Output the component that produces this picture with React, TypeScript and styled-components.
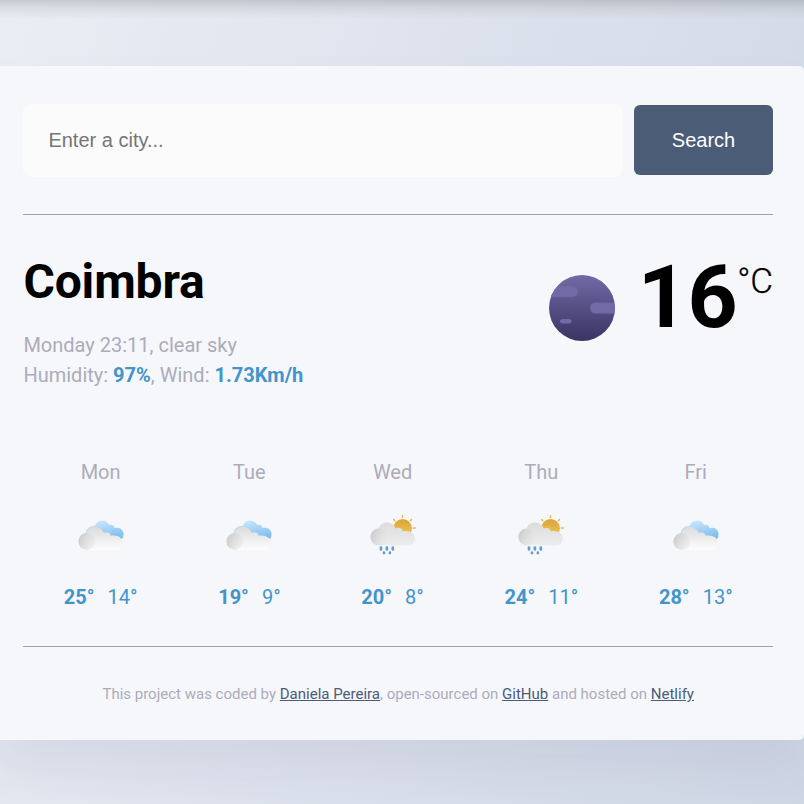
import React from "react";
import styled, { createGlobalStyle } from "styled-components";

const GlobalStyle = createGlobalStyle`
  *, *::before, *::after { box-sizing: border-box; }
  html, body { margin: 0; overflow: hidden; }
  body { font-family: Roboto, "Liberation Sans", sans-serif; color: #000; }
`;

const Page = styled.div`
  height: 804px;
  padding-top: 66px;
  overflow: hidden;
  background:
    linear-gradient(180deg, rgba(90, 90, 90, 0.24) 0, rgba(90, 90, 90, 0.1) 8px, rgba(90, 90, 90, 0) 19px),
    linear-gradient(105deg, #e9edf4 0%, #cfd7e5 100%);
`;

const Card = styled.main`
  width: 811.6px;
  height: 674px;
  margin-left: -7.6px;
  padding: 38px 31px 0;
  border-radius: 5px;
  background: #f6f7fb;
  box-shadow: 0 30px 50px rgba(65, 50, 100, 0.08);
`;

const SearchForm = styled.form`
  display: flex;
  align-items: center;
  height: 73px;
  gap: 11px;
`;

const CityInput = styled.input`
  width: 599.6px;
  height: 73px;
  padding: 0 25px;
  border: 0;
  border-radius: 8px;
  outline: 0;
  background: #fbfbfb;
  font: 20px "Liberation Sans", Arial, sans-serif;
  &::placeholder { color: #757575; opacity: 1; }
`;

const SearchButton = styled.button`
  width: 139px;
  height: 70px;
  margin-bottom: 1px;
  padding: 0;
  border: 0;
  border-radius: 6px;
  background: #4b5c77;
  color: #fff;
  font: 20px "Liberation Sans", Arial, sans-serif;
`;

const Divider = styled.div<{ $gap: number }>`
  height: 1px;
  margin-top: ${({ $gap }) => $gap}px;
  background: #a1a1b3;
`;

const Current = styled.section`
  display: flex;
  justify-content: space-between;
  height: 245px;
  padding-top: 38px;
`;

const City = styled.h1`
  margin: 0 0 20px;
  font-size: 48px;
  font-weight: 700;
  line-height: 57px;
  letter-spacing: -0.15px;
`;

const Detail = styled.p`
  margin: 0;
  color: #acacb9;
  font-size: 20px;
  line-height: 30px;
`;

const Value = styled.strong`
  color: #4294cb;
  font-weight: 700;
`;

const Reading = styled.div`
  display: flex;
  align-items: flex-start;
`;

const Planet = styled.svg`
  width: 66px;
  height: 66px;
  margin: 22px 23px 0 0;
`;

const Degrees = styled.span`
  font-size: 87.5px;
  font-weight: 700;
  line-height: 88px;
  letter-spacing: -0.5px;
`;

const Unit = styled.span`
  margin-top: 8px;
  font-size: 35px;
  font-weight: 300;
  line-height: 42px;
  letter-spacing: -0.1px;
  -webkit-text-stroke: 0.25px #000;
`;

const Forecast = styled.section`
  display: flex;
  justify-content: space-around;
  height: 186px;
`;

const Day = styled.div`
  display: flex;
  flex-direction: column;
  align-items: center;
`;

const DayName = styled.div`
  color: #acacb9;
  font-size: 20px;
  line-height: 24px;
`;

const WeatherIcon = styled.svg`
  width: 60px;
  height: 60px;
  margin: 22px 0 19px;
`;

const Temps = styled.div`
  display: flex;
  gap: 13px;
  color: #4294cb;
  font-size: 20px;
  line-height: 25px;
`;

const Footer = styled.footer`
  margin-top: 38px;
  color: #acacb9;
  font-size: 15px;
  line-height: 18px;
  text-align: center;
`;

const Link = styled.a`
  color: #4b5c77;
  text-decoration: underline;
`;

type Kind = "clouds" | "rain";

const Weather = ({ kind, id }: { kind: Kind; id: string }) => {
  const y = kind === "clouds" ? 44 : 39.5;
  return (
    <WeatherIcon viewBox="0 0 60 60" aria-hidden="true">
      <defs>
        <linearGradient id={`${id}-cloud`} x1="0" y1="0" x2="0" y2="1">
          <stop offset="0" stopColor="#dcdcdc" />
          <stop offset="1" stopColor={kind === "clouds" ? "#fdfdfe" : "#ededee"} />
        </linearGradient>
        <linearGradient id={`${id}-puff`} x1="0" y1="0.3" x2="1" y2="0.7">
          <stop offset="0" stopColor="#cbcbcb" />
          <stop offset="1" stopColor="#e9e9e9" stopOpacity="0.5" />
        </linearGradient>
        <linearGradient id={`${id}-blue`} x1="0.3" y1="0" x2="0.7" y2="1">
          <stop offset="0" stopColor="#cbe7fb" />
          <stop offset="1" stopColor="#78bbef" />
        </linearGradient>
        <linearGradient id={`${id}-sun`} x1="0" y1="0" x2="0" y2="1">
          <stop offset="0" stopColor="#daa43d" />
          <stop offset="1" stopColor="#f3c94f" />
        </linearGradient>
      </defs>
      {kind === "clouds" ? (
        <path
          fill={`url(#${id}-blue)`}
          d="M14.500 32C14 24 17.500 19.500 23.500 20C26.500 13 35.500 13 38 19C40.500 18 43 19 43.500 22C49 21 52.500 24 52.500 28C52.500 31.500 51.500 33.500 48.500 34Z"
        />
      ) : (
        <g>
          <circle cx="39.600" cy="22.400" r="9.300" fill={`url(#${id}-sun)`} />
          <path
            d="M39.500 9.800v1.600M30.700 13.500l1 1.200M48.500 13.500l-1.100 1.200M50.300 22h2"
            stroke="#e9b25b"
            strokeWidth="1.500"
            strokeLinecap="round"
          />
        </g>
      )}
      {kind === "rain" && (
        <path
          d="M18 41.500v2M23.900 41.500v2M29.800 41.500v2M21 46.700v.4M26.900 46.700v.4"
          stroke="#659dd0"
          strokeWidth="2.700"
          strokeLinecap="round"
        />
      )}
      <path
        transform={`translate(7.400 ${y})`}
        fill={`url(#${id}-cloud)`}
        d="M8.500 0C-2 0-3 -15 8 -17C11 -25 22 -25 25.500 -16.900C28 -18.500 31.500 -17.500 32.500 -14.300C39 -15.500 44.500 -12.500 44.500 -7C44.500 -2 41 0 37 0Z"
      />
      <circle cx="15.900" cy={y - 8.5} r="8.500" fill={`url(#${id}-puff)`} />
    </WeatherIcon>
  );
};

const days: { name: string; kind: Kind; high: number; low: number }[] = [
  { name: "Mon", kind: "clouds", high: 25, low: 14 },
  { name: "Tue", kind: "clouds", high: 19, low: 9 },
  { name: "Wed", kind: "rain", high: 20, low: 8 },
  { name: "Thu", kind: "rain", high: 24, low: 11 },
  { name: "Fri", kind: "clouds", high: 28, low: 13 },
];

export default function App() {
  return (
    <Page>
      <GlobalStyle />
      <Card>
        <SearchForm onSubmit={(e) => e.preventDefault()}>
          <CityInput placeholder="Enter a city..." />
          <SearchButton type="submit">Search</SearchButton>
        </SearchForm>
        <Divider $gap={37} />
        <Current>
          <div>
            <City>Coimbra</City>
            <Detail>Monday 23:11, clear sky</Detail>
            <Detail>
              Humidity: <Value>97%</Value>, Wind: <Value>1.73Km/h</Value>
            </Detail>
          </div>
          <Reading>
            <Planet viewBox="0 0 66 66" aria-hidden="true">
              <defs>
                <linearGradient id="planet" x1="0" y1="0" x2="0" y2="1">
                  <stop offset="0" stopColor="#726aa7" />
                  <stop offset="1" stopColor="#393462" />
                </linearGradient>
                <clipPath id="disc">
                  <circle cx="33" cy="33" r="33" />
                </clipPath>
              </defs>
              <g clipPath="url(#disc)">
                <rect width="66" height="66" fill="url(#planet)" />
                <g fill="#716aa6">
                  <rect x="-10" y="11" width="39" height="11" rx="5.500" />
                  <rect x="41" y="27.500" width="35" height="11" rx="5.500" />
                  <rect x="11" y="44" width="11.500" height="4.500" rx="2.250" />
                </g>
              </g>
            </Planet>
            <Degrees>16</Degrees>
            <Unit>°C</Unit>
          </Reading>
        </Current>
        <Forecast>
          {days.map((day) => (
            <Day key={day.name}>
              <DayName>{day.name}</DayName>
              <Weather kind={day.kind} id={day.name} />
              <Temps>
                <strong>{day.high}°</strong>
                <span>{day.low}°</span>
              </Temps>
            </Day>
          ))}
        </Forecast>
        <Divider $gap={0} />
        <Footer>
          This project was coded by <Link>Daniela Pereira</Link>, open-sourced on <Link>GitHub</Link> and hosted on{" "}
          <Link>Netlify</Link>
        </Footer>
      </Card>
    </Page>
  );
}
